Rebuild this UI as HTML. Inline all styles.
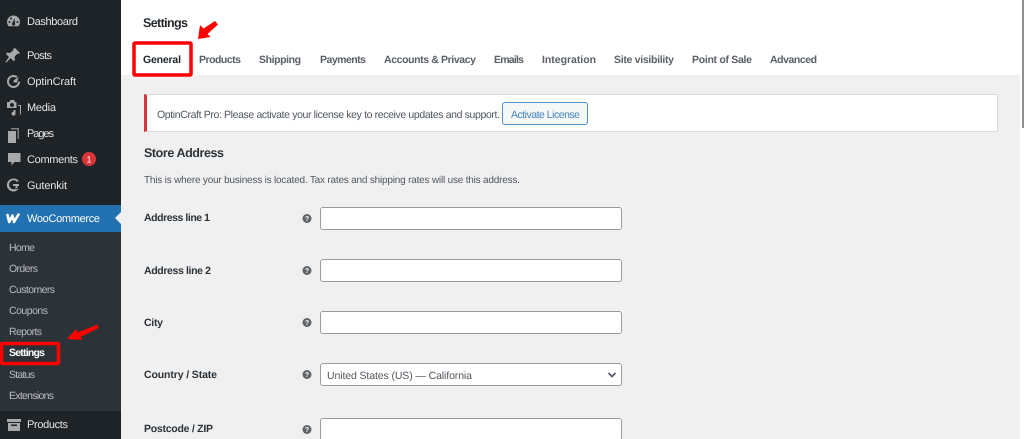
<!DOCTYPE html>
<html><head><meta charset="utf-8"><title>Settings</title>
<style>
html,body{margin:0;padding:0;width:1024px;height:439px;overflow:hidden;background:#fff}
#w{position:absolute;left:0;top:0;width:1024px;height:439px;overflow:hidden;filter:blur(.3px)}
#w div{position:absolute;box-sizing:border-box}
svg{position:absolute;left:0;top:0}
text{font-family:"Liberation Sans",sans-serif;font-size:11px;text-rendering:geometricPrecision}
.m{fill:#e4e5e6}.s{fill:#b9bbbe;font-size:10.5px}.t{fill:#5a6066;font-weight:700;font-size:10.5px}
.l{fill:#2c3338;font-weight:700;font-size:10.5px}
.in{left:320px;width:302px;height:23px;background:#fff;border:1px solid #999ca1;border-radius:3px}
</style></head><body><div id="w">
<div style="left:0;top:0;width:121px;height:439px;background:#1d2327"></div>
<div style="left:0;top:232px;width:121px;height:179px;background:#2c3338"></div>
<div style="left:0;top:205px;width:121px;height:27px;background:#2271b1"></div>
<div style="left:121px;top:75px;width:899px;height:364px;background:#f0f0f1"></div>
<div style="left:144px;top:94px;width:854px;height:38px;background:#fff;border:1px solid #dcdcde;border-left:3px solid #d63638"></div>
<div style="left:502px;top:102px;width:86px;height:23px;background:#f6f7f7;border:1px solid #4f8fc4;border-radius:3px"></div>
<div class="in" style="top:207px"></div>
<div class="in" style="top:259px"></div>
<div class="in" style="top:311px"></div>
<div class="in" style="top:363px"></div>
<div class="in" style="top:418px"></div>
<div style="left:1022px;top:0;width:2px;height:128px;background:#8f8f94"></div>
<svg width="1024" height="439" viewBox="0 0 1024 439">
<path d="M121 212l-6 6 6 6z" fill="#f0f0f1"/>
<g fill="#a7aaad">
<path fill-rule="evenodd" d="M13.500 15.500a6.500 6.500 0 0 0-6.500 6.500c0 1.600.6 3 1.600 4.200h9.800c1-1.200 1.600-2.600 1.600-4.200a6.500 6.500 0 0 0-6.500-6.500zm1 3l.6 5a1.600 1.600 0 1 1-3 0zM9.500 21a1 1 0 1 1 0 2 1 1 0 0 1 0-2zm8 0a1 1 0 1 1 0 2 1 1 0 0 1 0-2zM11 17.500a1 1 0 1 1 0 2 1 1 0 0 1 0-2z"/>
<path d="M15 48l5 5-1.500 1-1-.5-3 3.500.5 3-1.500 1-3-3-4 4.500-1-.5 3.500-5-3-3 1-1.500 3 .5 3.500-3-.5-1z"/>
<path fill-rule="evenodd" d="M13.500 75a6.500 6.500 0 1 0 6.500 6.500h-2a4.500 4.500 0 1 1-1.800-3.600l1.300-1.600A6.500 6.500 0 0 0 13.500 75zM13.500 80.500l5-3.500-1.500 5.500h-3.500z"/>
<path fill-rule="evenodd" d="M7 102h2.500l1-2h4v2h2v6H7zM12 103a2 2 0 1 0 0 4 2 2 0 0 0 0-4zM18 105h3v9.500h-1v-8.500h-2zM13.500 110h2v3.500a2 2 0 1 1-2-1.800z"/>
<path d="M11 128h8v11h-1.500v-9.500H11z" opacity=".7"/><path d="M8 131h8v12H8z"/>
<path d="M8 153h12.500v9h-6l-3 3.500v-3.500H8z"/>
<path d="M13.500 178.500a6.500 6.500 0 1 0 5 10.500l-1.500-1.300a4.500 4.500 0 1 1 .2-5.600l1.500-1.300a6.500 6.500 0 0 0-5.200-2.300zM13 184h6v2h-1.500v3l-2 .5V186H13z"/>
</g>
<path d="M7.500 215l1.700 7 3.300-6.500 1.500 6.500 4.500-7.500" fill="none" stroke="#fff" stroke-width="2.600" stroke-linejoin="round" stroke-linecap="round"/>
<path fill-rule="evenodd" d="M7 419h14v3H7zM8 423h12v8H8zm3 1.500v1.500h6v-1.500z" fill="#a7aaad"/>
<circle cx="89" cy="159" r="7" fill="#d63638"/><text x="89" y="162.500" text-anchor="middle" fill="#fff" style="font-size:9px">1</text>
<text class="m" x="27" y="25" textLength="51">Dashboard</text>
<text class="m" x="27" y="59" textLength="25">Posts</text>
<text class="m" x="27" y="85" textLength="49">OptinCraft</text>
<text class="m" x="27" y="111" textLength="29">Media</text>
<text class="m" x="27" y="137" textLength="27">Pages</text>
<text class="m" x="27" y="163" textLength="51">Comments</text>
<text class="m" x="27" y="189" textLength="40">Gutenkit</text>
<text fill="#fff" x="27" y="222" textLength="73">WooCommerce</text>
<text class="m" x="27" y="428" textLength="41">Products</text>
<text class="s" x="9" y="251" textLength="26">Home</text>
<text class="s" x="9" y="272" textLength="29">Orders</text>
<text class="s" x="9" y="293" textLength="46">Customers</text>
<text class="s" x="9" y="314" textLength="39">Coupons</text>
<text class="s" x="9" y="335" textLength="33">Reports</text>
<text fill="#fff" font-weight="700" style="font-size:10.500px" x="9" y="356" textLength="36">Settings</text>
<text class="s" x="9" y="378" textLength="26">Status</text>
<text class="s" x="9" y="399" textLength="45">Extensions</text>
<text fill="#23282d" font-weight="700" style="font-size:12.500px" x="143" y="27" textLength="45">Settings</text>
<text fill="#23282d" font-weight="700" style="font-size:10.500px" x="143" y="63" textLength="38">General</text>
<text class="t" x="199" y="63" textLength="42">Products</text>
<text class="t" x="259" y="63" textLength="42">Shipping</text>
<text class="t" x="320" y="63" textLength="46">Payments</text>
<text class="t" x="384" y="63" textLength="92">Accounts &amp; Privacy</text>
<text class="t" x="494" y="63" textLength="30">Emails</text>
<text class="t" x="542" y="63" textLength="54">Integration</text>
<text class="t" x="614" y="63" textLength="60">Site visibility</text>
<text class="t" x="692" y="63" textLength="60">Point of Sale</text>
<text class="t" x="770" y="63" textLength="47">Advanced</text>
<text fill="#50575e" x="157" y="118" textLength="343" style="font-size:10.500px">OptinCraft Pro: Please activate your license key to receive updates and support.</text>
<text fill="#3f86bf" x="511" y="118" textLength="69" style="font-size:10.500px">Activate License</text>
<text fill="#2c3338" font-weight="700" style="font-size:12.500px" x="144" y="157" textLength="80">Store Address</text>
<text fill="#50575e" style="font-size:10px" x="144" y="183" textLength="376">This is where your business is located. Tax rates and shipping rates will use this address.</text>
<text class="l" x="144" y="221" textLength="66">Address line 1</text>
<text class="l" x="144" y="274" textLength="67">Address line 2</text>
<text class="l" x="144" y="326" textLength="19">City</text>
<text class="l" x="144" y="378" textLength="73">Country / State</text>
<text class="l" x="144" y="432" textLength="69">Postcode / ZIP</text>
<g text-anchor="middle" font-weight="700">
<circle cx="307" cy="218.500" r="4.500" fill="#5f6468"/><text x="307" y="221" fill="#fff" style="font-size:7px">?</text>
<circle cx="307" cy="270.500" r="4.500" fill="#5f6468"/><text x="307" y="273" fill="#fff" style="font-size:7px">?</text>
<circle cx="307" cy="322.500" r="4.500" fill="#5f6468"/><text x="307" y="325" fill="#fff" style="font-size:7px">?</text>
<circle cx="307" cy="374.500" r="4.500" fill="#5f6468"/><text x="307" y="377" fill="#fff" style="font-size:7px">?</text>
<circle cx="307" cy="429.500" r="4.500" fill="#5f6468"/><text x="307" y="432" fill="#fff" style="font-size:7px">?</text>
</g>
<text fill="#50575e" style="font-size:10.500px" x="327" y="379" textLength="145">United States (US) — California</text>
<path d="M608.500 373l3.500 3.500 3.500-3.500" fill="none" stroke="#50575e" stroke-width="1.700"/>
<rect x="134" y="43" width="57" height="32" fill="none" stroke="#f00" stroke-width="3.500" rx="1"/>
<rect x="1.500" y="343.500" width="57" height="20" fill="none" stroke="#f00" stroke-width="3.500" rx="1"/>
<path d="M198 39l2-14 3.500 3.500 11.500-7.500 3 3.500-10.500 9.500 3 3z" fill="#f00"/>
<path d="M67 339l9-10 1.500 3.500 20-8 1 3.500-18 9 2 3z" fill="#f00"/>
</svg>
</div></body></html>
